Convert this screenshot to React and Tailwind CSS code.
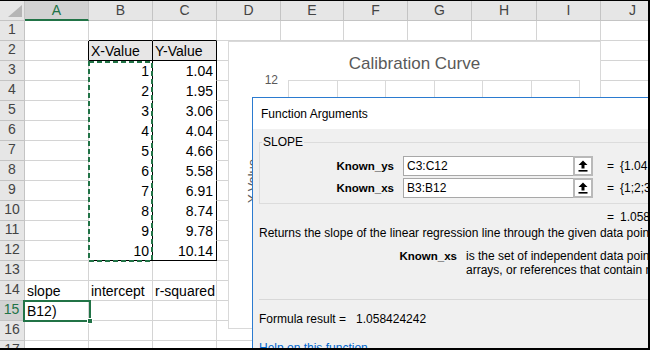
import React from 'react';

const COLS = ['A', 'B', 'C', 'D', 'E', 'F', 'G', 'H', 'I', 'J'];
const ROWS = Array.from({ length: 17 }, (_, i) => i + 1);
const XS = ['1', '2', '3', '4', '5', '6', '7', '8', '9', '10'];
const YS = ['1.04', '1.95', '3.06', '4.04', '4.66', '5.58', '6.91', '8.74', '9.78', '10.14'];

// what sits in each cell; numbers are right aligned
function cellValue(row, col) {
  if (row === 2 && col === 'B') return { text: 'X-Value' };
  if (row === 2 && col === 'C') return { text: 'Y-Value' };
  if (row >= 3 && row <= 12 && col === 'B') return { text: XS[row - 3], num: true };
  if (row >= 3 && row <= 12 && col === 'C') return { text: YS[row - 3], num: true };
  if (row === 14 && col === 'A') return { text: 'slope' };
  if (row === 14 && col === 'B') return { text: 'intercept' };
  if (row === 14 && col === 'C') return { text: 'r-squared' };
  if (row === 15 && col === 'A') return { text: 'B12)' };
  return null;
}

function cellBorders(row, col) {
  const inTable = row >= 2 && row <= 12 && (col === 'B' || col === 'C');
  let right = 'border-r-[#d4d4d4]';
  let bottom = 'border-b-[#d4d4d4]';
  let bg = 'bg-white';
  if (row === 1 && (col === 'B' || col === 'C')) bottom = 'border-b-black';
  if (row === 2 && col === 'A') right = 'border-r-black';
  if (inTable) {
    right = 'border-r-black';
    bottom = row === 2 || row === 12 ? 'border-b-black' : 'border-b-white';
  }
  if (row === 2 && (col === 'B' || col === 'C')) bg = 'bg-[#e7e6e6]';
  return `border-r border-b ${right} ${bottom} ${bg}`;
}

function UploadArrow() {
  return (
    <svg width="10" height="12" viewBox="0 0 10 12">
      <path d="M5 0.5 L9.5 5 H6.5 V8.5 H3.5 V5 H0.5 Z" fill="#000" />
      <rect x="0.5" y="10" width="9" height="1.6" fill="#000" />
    </svg>
  );
}

function ArgRow({ label, value, result, className = '' }) {
  return (
    <div className={`flex items-center h-[20px] ${className}`}>
      <div className="w-[134px] shrink-0 text-right font-bold text-[11.5px]">{label}</div>
      <div className="ml-[9px] w-[190px] shrink-0 h-[20px] flex bg-white border border-[#a8a8a8]">
        <div className="flex-1 flex items-center pl-[3px]">{value}</div>
        <div className="w-[20px] -my-px -mr-px border-2 border-[#b9b9b9] bg-white flex items-center justify-center">
          <UploadArrow />
        </div>
      </div>
      <div className="ml-[14px] shrink-0">=</div>
      <div className="ml-[6px] shrink-0 whitespace-nowrap">{result}</div>
    </div>
  );
}

function Chart() {
  return (
    <div className="absolute left-[228px] top-[40px] w-[373px] h-[288px] bg-white border border-[#d9d9d9] font-['Liberation_Sans',Arial,sans-serif] text-[#595959]">
      <div className="pt-[12px] text-center text-[17px] leading-[20px]">Calibration Curve</div>
      <div className="flex mt-[6px]">
        <div className="w-[59px] shrink-0 pr-[10px] text-right text-[12px] leading-[14px] -mt-[7px]">12</div>
        <div className="w-[292px] h-[240px] grid grid-cols-6 border-t border-l border-[#d9d9d9]">
          <div className="border-r border-[#d9d9d9]" />
          <div className="border-r border-[#d9d9d9]" />
          <div className="border-r border-[#d9d9d9]" />
          <div className="border-r border-[#d9d9d9]" />
          <div className="border-r border-[#d9d9d9]" />
          <div className="border-r border-[#d9d9d9]" />
        </div>
      </div>
      <div className="absolute -left-[3px] top-[132px] w-[54px] text-center text-[13px] leading-[14px] -rotate-90">
        Y-Value
      </div>
    </div>
  );
}

function FunctionArguments() {
  return (
    <div className="absolute left-[252px] top-[96px] w-[430px] h-[270px] border border-[#2b7bd0] bg-[#f0f0f0] font-['Liberation_Sans',Arial,sans-serif] text-[12px] leading-[14px] text-black">
      <div className="h-[31px] bg-white flex items-center pl-[8px]">Function Arguments</div>
      <div className="px-[6px]">
        <fieldset className="mt-[6px] border border-[#dcdcdc] pb-[5px]">
          <legend className="ml-[2px] px-[1px]">SLOPE</legend>
          <ArgRow label="Known_ys" value="C3:C12" result="{1.04;1.95;3.06;4.04;4.66;5.58" className="mt-[7px]" />
          <ArgRow label="Known_xs" value="B3:B12" result="{1;2;3;4;5;6;7;8;9;10}" className="mt-[2px]" />
        </fieldset>
        <div className="flex mt-[6px] pl-[348px] whitespace-nowrap">
          <span>=</span>
          <span className="ml-[6px]">1.058424242</span>
        </div>
        <div className="mt-[2px] whitespace-nowrap">
          Returns the slope of the linear regression line through the given data points.
        </div>
        <div className="flex mt-[9px]">
          <div className="w-[198px] shrink-0 text-right font-bold text-[11.5px]">Known_xs</div>
          <div className="ml-[9px] shrink-0 whitespace-nowrap">
            <div>is the set of independent data points and can be numbers or names,</div>
            <div>arrays, or references that contain numbers.</div>
          </div>
        </div>
        <div className="mt-[22px] border-t border-[#d8d8d8]" />
        <div className="mt-[12px] flex whitespace-nowrap">
          <span>Formula result =</span>
          <span className="ml-[10px]">1.058424242</span>
        </div>
        <div className="mt-[15px] text-[#0066cc] underline whitespace-nowrap">Help on this function</div>
      </div>
    </div>
  );
}

export default function App() {
  return (
    <div className="relative w-[650px] h-[350px] overflow-hidden bg-white border-t border-r-2 border-b-2 border-black font-['Liberation_Sans',Arial,sans-serif] text-[14px] text-black">
      <div className="grid w-max grid-cols-[25px_64px_64px_64px_64px_63px_64px_64px_65px_64px_64px] auto-rows-[20px]">
        {/* column headers */}
        <div className="relative bg-[#e6e6e6] border-r border-b border-[#c4c4c4]">
          <svg className="absolute left-[8px] top-[4px]" width="14" height="12" viewBox="0 0 14 12">
            <polygon points="14,0 14,12 0,12" fill="#b5b5b5" />
          </svg>
        </div>
        {COLS.map((c) =>
          c === 'A' ? (
            <div
              key={c}
              className="flex items-center justify-center bg-[#d2d2d2] border-r border-r-[#c4c4c4] border-b-2 border-b-[#217346] text-[#217346]"
            >
              {c}
            </div>
          ) : (
            <div
              key={c}
              className="flex items-center justify-center bg-[#e6e6e6] border-r border-b border-[#c4c4c4] text-[#444]"
            >
              {c}
            </div>
          )
        )}

        {ROWS.map((r) => (
          <React.Fragment key={r}>
            {r === 15 ? (
              <div className="flex items-end justify-center bg-[#d2d2d2] border-r-2 border-r-[#217346] border-b border-b-[#c4c4c4] text-[#217346]">
                {r}
              </div>
            ) : (
              <div className="flex items-end justify-center bg-[#e6e6e6] border-r border-b border-[#c4c4c4] text-[#444]">
                {r}
              </div>
            )}
            {COLS.map((c) => {
              const v = cellValue(r, c);
              return (
                <div
                  key={c}
                  className={`flex items-end whitespace-nowrap overflow-visible leading-[17px] ${cellBorders(r, c)} ${
                    v && v.num ? 'justify-end pr-[3px]' : 'pl-[2px]'
                  }`}
                >
                  {v ? v.text : null}
                </div>
              );
            })}
          </React.Fragment>
        ))}
      </div>

      {/* copy marquee round B3:B12 */}
      <svg className="absolute left-[88px] top-[60px]" width="66" height="202">
        <rect x="1" y="1" width="63" height="199" fill="none" stroke="#217346" strokeWidth="2" strokeDasharray="5 3" />
      </svg>

      {/* active cell A15 */}
      <div className="absolute left-[23px] top-[299px] w-[68px] h-[22px] border-2 border-[#217346]" />
      <div className="absolute left-[87px] top-[317px] w-[6px] h-[6px] bg-[#217346] border border-white" />

      <Chart />
      <FunctionArguments />
    </div>
  );
}
